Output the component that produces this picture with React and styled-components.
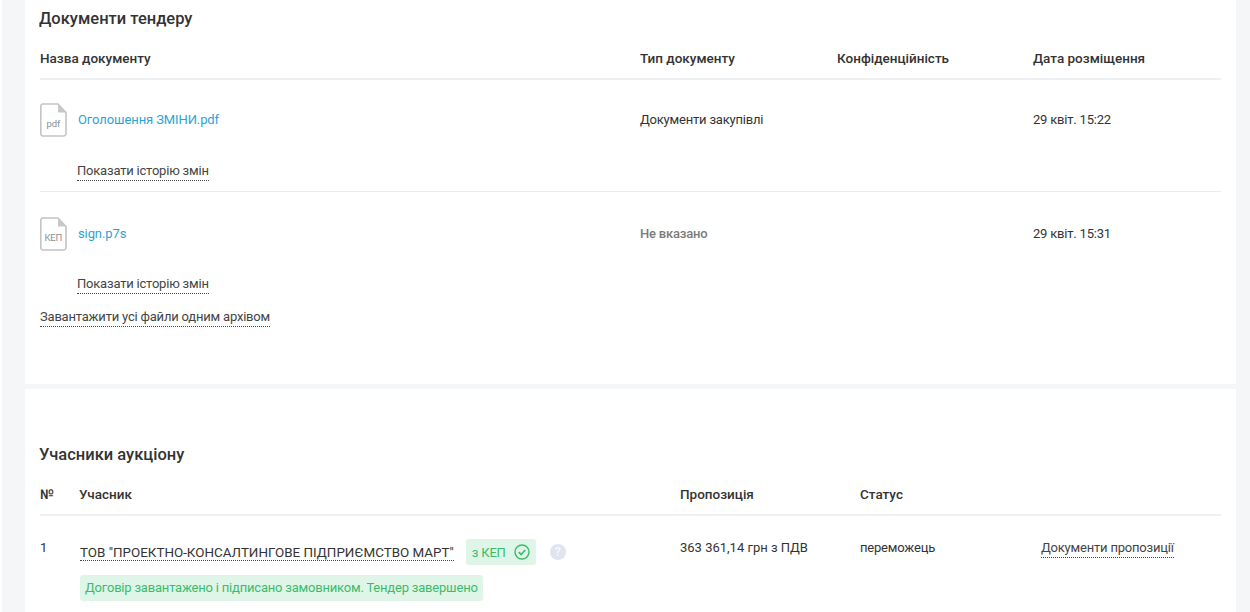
import React from "react";
import styled, { createGlobalStyle } from "styled-components";

const Global = createGlobalStyle`
  html, body { margin: 0; padding: 0; background: #fff; }
  body { font-family: Roboto, "Liberation Sans", sans-serif; font-size: 13px; letter-spacing: -0.2px; color: #333; overflow: hidden; }
`;
const Page = styled.div`
  width: 1250px; height: 612px; overflow: hidden; box-sizing: border-box;
  margin: 0; padding: 0 14px 0 25px;
  background: linear-gradient(to right, #fff 0, #fff 2px, #f5f6f8 2px);
  display: flex; flex-direction: column; gap: 5px;
`;
const Card = styled.section`
  background: #fff; box-sizing: border-box; flex: none;
  height: ${p => p.$h}px; padding: ${p => p.$top}px 15px 0 15px;
`;
const Title = styled.h2`
  margin: 0 0 0 -1px; font-size: 16.5px; font-weight: 500; line-height: 20px; color: #333; letter-spacing: 0;
`;
const DocGrid = styled.div`
  display: grid; grid-template-columns: 600px 197px 196px 1fr;
`;
const BidGrid = styled.div`
  display: grid; grid-template-columns: 39px 601px 180px 181px 1fr;
`;
const HeadCell = styled.div`
  font-weight: 500; font-size: 13.5px; line-height: 20px; color: #333; letter-spacing: 0;
  height: 20px; padding: 10px 0 10px; margin-top: 9px;
  border-bottom: 2px solid #eef0f4;
`;
const DocRow = styled(DocGrid)`
  height: 111px;
  border-bottom: ${p => (p.$last ? "none" : "1px solid #e9edf2")};
`;
const NameCell = styled.div`
  display: flex; flex-direction: column;
`;
const FileLine = styled.div`
  display: flex; align-items: flex-start; gap: 11px; padding-top: ${p => p.$top}px; height: 34px;
`;
const FileLink = styled.a`
  color: #2ea3d2; font-size: 13px; letter-spacing: -0.1px; line-height: 18px; margin-top: 8px; text-decoration: none;
`;
const Dotted = styled.a`
  display: inline-block; align-self: flex-start; color: #444; line-height: 16px; padding-bottom: 1px;
  border-bottom: 1px dotted #444; text-decoration: none;
  margin-left: ${p => p.$ml || 0}px; margin-top: ${p => p.$mt || 0}px;
`;
const Cell = styled.div`
  padding-top: ${p => p.$top || 0}px; line-height: 18px;
  color: ${p => (p.$muted ? "#7b7b7b" : "#333")};
  font-weight: ${p => (p.$muted ? 500 : 400)};
`;
const PriceCell = styled(Cell)`
  letter-spacing: 0;
`;
const Company = styled.div`
  display: flex; align-items: center; gap: 12px; height: 26px; margin-left: 1px;
`;
const CompanyName = styled.a`
  color: #333; font-size: 13.4px; letter-spacing: 0; line-height: 15px; border-bottom: 1px dotted #444; white-space: nowrap; margin-top: 1px;
`;
const Kep = styled.span`
  display: inline-flex; align-items: center; gap: 8px; height: 26px; box-sizing: border-box; padding: 0 6px;
  background: #dff5e8; color: #3dbb6b; border-radius: 3px;
`;
const Help = styled.span`
  width: 16px; height: 16px; border-radius: 50%; background: #dfe4ee; color: #f5f7fb; margin-left: 2px;
  display: inline-flex; align-items: center; justify-content: center; font-size: 12px; font-weight: 700; line-height: 16px;
`;
const Status = styled.div`
  display: inline-block; margin: 10px 0 0 1px; padding: 0 5px 0 5px; height: 26px; line-height: 26px;
  background: #dff5e8; color: #3dbb6b; border-radius: 3px; white-space: nowrap;
`;
const BidBody = styled(BidGrid)`
  padding-top: 23px;
`;

const FileIcon = ({ label }) => (
  <svg width="27" height="34" viewBox="0 0 27 34" fill="none">
    <path d="M2.5 1h15.5l8 8.5v21a2.5 2.5 0 0 1-2.5 2.5h-21A2.5 2.5 0 0 1 0.8 30.5v-27A2.5 2.5 0 0 1 2.5 1z" stroke="#c4c4c4" strokeWidth="1.6" fill="#fff" />
    <path d="M18 1.5v8h8z" fill="#c8c8c8" />
    <text x="13.3" y="24" textAnchor="middle" fontFamily="Roboto, sans-serif" fontSize="9.5" fill="#8d8d8d">{label}</text>
  </svg>
);

const docs = [
  { label: "pdf", name: "Оголошення ЗМІНИ.pdf", type: "Документи закупівлі", date: "29 квіт. 15:22", pad: 23, link: 26, cell: 31 },
  { label: "КЕП", name: "sign.p7s", type: "Не вказано", muted: true, date: "29 квіт. 15:31", last: true, pad: 25, link: 25, cell: 33 },
];

export default function App() {
  return (
    <Page>
      <Global />
      <Card $h={384} $top={9}>
        <Title>Документи тендеру</Title>
        <DocGrid>
          <HeadCell>Назва документу</HeadCell>
          <HeadCell>Тип документу</HeadCell>
          <HeadCell>Конфіденційність</HeadCell>
          <HeadCell>Дата розміщення</HeadCell>
        </DocGrid>
        {docs.map(d => (
          <DocRow key={d.name} $last={d.last}>
            <NameCell>
              <FileLine $top={d.pad}>
                <FileIcon label={d.label} />
                <FileLink>{d.name}</FileLink>
              </FileLine>
              <Dotted $ml={37} $mt={d.link}>Показати історію змін</Dotted>
            </NameCell>
            <Cell $top={d.cell} $muted={d.muted}>{d.type}</Cell>
            <Cell $top={d.cell} />
            <Cell $top={d.cell}>{d.date}</Cell>
          </DocRow>
        ))}
        <Dotted $mt={6}>Завантажити усі файли одним архівом</Dotted>
      </Card>
      <Card $h={240} $top={56}>
        <Title>Учасники аукціону</Title>
        <BidGrid>
          <HeadCell>№</HeadCell>
          <HeadCell>Учасник</HeadCell>
          <HeadCell>Пропозиція</HeadCell>
          <HeadCell>Статус</HeadCell>
          <HeadCell />
        </BidGrid>
        <BidBody>
          <Cell>1</Cell>
          <div>
            <Company>
              <CompanyName>ТОВ "ПРОЕКТНО-КОНСАЛТИНГОВЕ ПІДПРИЄМСТВО МАРТ"</CompanyName>
              <Kep>
                з КЕП
                <svg width="16" height="16" viewBox="0 0 16 16" fill="none" stroke="#3dbb6b" strokeWidth="1.4">
                  <circle cx="8" cy="8" r="7" />
                  <path d="M4.8 8.2l2.3 2.3 4.2-4.5" strokeWidth="1.7" />
                </svg>
              </Kep>
              <Help>?</Help>
            </Company>
            <Status>Договір завантажено і підписано замовником. Тендер завершено</Status>
          </div>
          <PriceCell>363 361,14 грн з ПДВ</PriceCell>
          <Cell>переможець</Cell>
          <Cell><Dotted>Документи пропозиції</Dotted></Cell>
        </BidBody>
      </Card>
    </Page>
  );
}
